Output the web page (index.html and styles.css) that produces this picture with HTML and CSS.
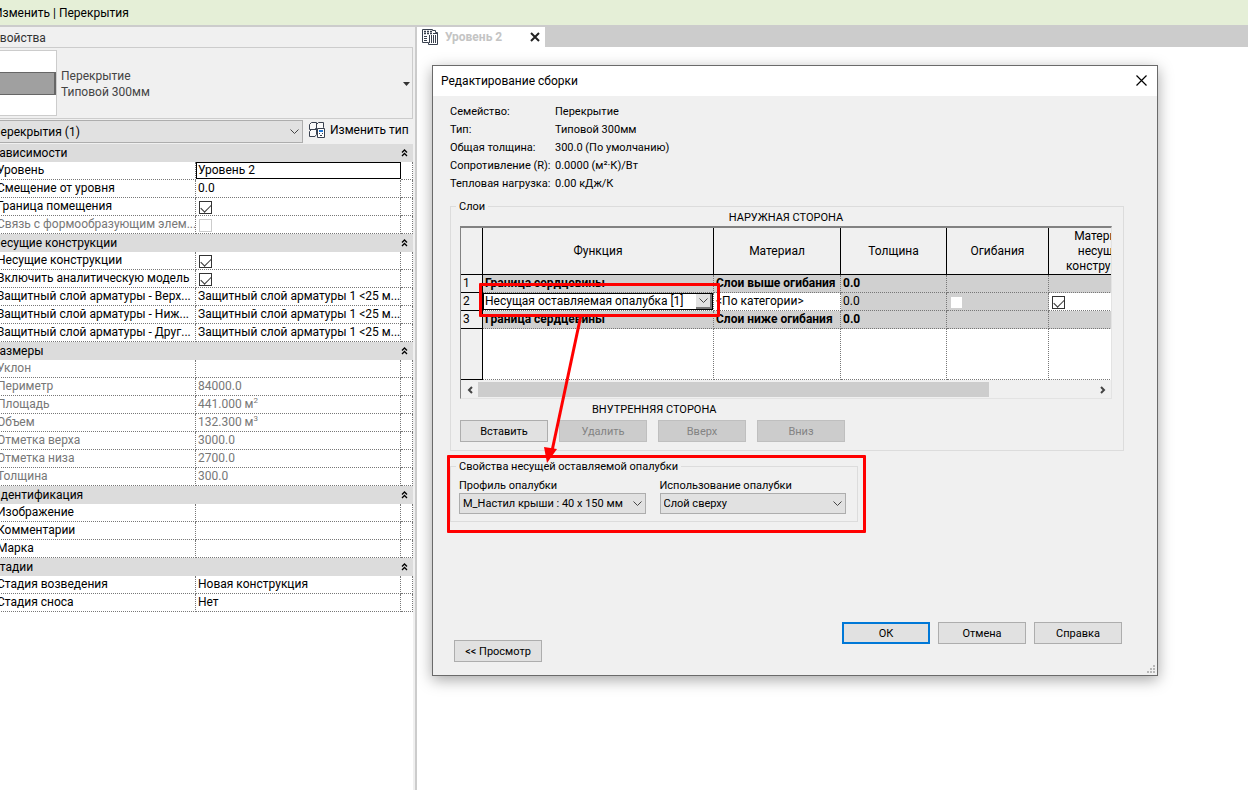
FILE: index.html
```html
<!DOCTYPE html>
<html lang="ru">
<head>
<meta charset="utf-8">
<title>Редактирование сборки</title>
<link rel="stylesheet" href="styles.css">
</head>
<body>
<div class="app">
  <header class="ribbon">Изменить | Перекрытия</header>
  <div class="main">
    <aside class="props">
      <h2 class="props-title">Свойства</h2>
      <div class="type-card">
        <div class="preview"><span class="slab"></span></div>
        <div class="type-name"><span>Перекрытие</span><span>Типовой 300мм</span></div>
        <button class="type-drop" aria-label="Выбор типа"><svg width="7" height="4" viewBox="0 0 7 4"><path d="M0 0h7L3.500 4z" fill="#333"/></svg></button>
      </div>
      <div class="filter">
        <div class="select filter-select">
          <select aria-label="Фильтр"><option>Перекрытия (1)</option></select>
          <svg class="chev" viewBox="0 0 9 5"><path d="M.5.5l4 4 4-4"/></svg>
        </div>
        <button class="edit-type">
          <svg width="16" height="16" viewBox="0 0 16 16" fill="#fafafa" stroke="#39414f"><path d="M.5 2.500l2-2h5v5l-1.500 2H.5zM7.500 2.500l2-2h5v5l-1.500 2H7.500zM.5 9.500l2-2h5v5l-1.500 2H.5z"/><path d="M8.500 6.500h7v9h-7z" fill="#fff"/><path d="M10 8h4v2h-4z" fill="#2277d4" stroke="none"/><path d="M10 11.500h1M13 11.500h1M11 13.500h2"/></svg>
          <span>Изменить тип</span>
        </button>
      </div>
      <table class="grid">
        <colgroup><col class="c-name"><col class="c-value"><col class="c-end"></colgroup>
        <tbody>
          <tr class="group"><th colspan="2">Зависимости</th><td><svg class="dbl" viewBox="0 0 7 8"><path d="M1 3.500L3.500 1 6 3.500M1 7l2.500-2.500L6 7"/></svg></td></tr>
          <tr><th>Уровень</th><td class="active"><input class="cell-input" type="text" value="Уровень 2" aria-label="Уровень"></td><td></td></tr>
          <tr><th>Смещение от уровня</th><td>0.0</td><td></td></tr>
          <tr><th>Граница помещения</th><td><input type="checkbox" checked aria-label="Граница помещения"></td><td></td></tr>
          <tr class="off"><th>Связь с формообразующим элем...</th><td><input type="checkbox" disabled aria-label="Связь с формообразующим элементом"></td><td></td></tr>
        </tbody>
        <tbody>
          <tr class="group"><th colspan="2">Несущие конструкции</th><td><svg class="dbl" viewBox="0 0 7 8"><path d="M1 3.500L3.500 1 6 3.500M1 7l2.500-2.500L6 7"/></svg></td></tr>
          <tr><th>Несущие конструкции</th><td><input type="checkbox" checked aria-label="Несущие конструкции"></td><td></td></tr>
          <tr><th>Включить аналитическую модель</th><td><input type="checkbox" checked aria-label="Включить аналитическую модель"></td><td></td></tr>
          <tr><th>Защитный слой арматуры - Верх...</th><td>Защитный слой арматуры 1 &lt;25 м...</td><td></td></tr>
          <tr><th>Защитный слой арматуры - Ниж...</th><td>Защитный слой арматуры 1 &lt;25 м...</td><td></td></tr>
          <tr><th>Защитный слой арматуры - Друг...</th><td>Защитный слой арматуры 1 &lt;25 м...</td><td></td></tr>
        </tbody>
        <tbody>
          <tr class="group"><th colspan="2">Размеры</th><td><svg class="dbl" viewBox="0 0 7 8"><path d="M1 3.500L3.500 1 6 3.500M1 7l2.500-2.500L6 7"/></svg></td></tr>
          <tr class="off"><th>Уклон</th><td></td><td></td></tr>
          <tr class="off"><th>Периметр</th><td>84000.0</td><td></td></tr>
          <tr class="off"><th>Площадь</th><td>441.000 м<sup>2</sup></td><td></td></tr>
          <tr class="off"><th>Объем</th><td>132.300 м<sup>3</sup></td><td></td></tr>
          <tr class="off"><th>Отметка верха</th><td>3000.0</td><td></td></tr>
          <tr class="off"><th>Отметка низа</th><td>2700.0</td><td></td></tr>
          <tr class="off"><th>Толщина</th><td>300.0</td><td></td></tr>
        </tbody>
        <tbody>
          <tr class="group"><th colspan="2">Идентификация</th><td><svg class="dbl" viewBox="0 0 7 8"><path d="M1 3.500L3.500 1 6 3.500M1 7l2.500-2.500L6 7"/></svg></td></tr>
          <tr><th>Изображение</th><td></td><td></td></tr>
          <tr><th>Комментарии</th><td></td><td></td></tr>
          <tr><th>Марка</th><td></td><td></td></tr>
        </tbody>
        <tbody>
          <tr class="group"><th colspan="2">Стадии</th><td><svg class="dbl" viewBox="0 0 7 8"><path d="M1 3.500L3.500 1 6 3.500M1 7l2.500-2.500L6 7"/></svg></td></tr>
          <tr><th>Стадия возведения</th><td>Новая конструкция</td><td></td></tr>
          <tr><th>Стадия сноса</th><td>Нет</td><td></td></tr>
        </tbody>
      </table>
    </aside>

    <main class="canvas">
      <div class="tabs">
        <div class="tab">
          <svg width="17" height="16" viewBox="0 0 17 16" fill="none" stroke="#39414f"><path d="M.5.500h10v1h3v2h2v12h-9v-2h-6z" fill="#fff"/><path d="M2 2.500h8M2 4.500h8" stroke-width="1.500" stroke-dasharray="2 1"/><path d="M2 7.500h4M2 9.500h4M2 11.500h4" stroke-dasharray="3 1"/><path d="M7.500 6v8M9.500 6v8M11.500 6v8M13.500 6v8M11 4.500h4"/></svg>
          <span>Уровень 2</span>
          <button class="tab-close" aria-label="Закрыть вид"><svg width="10" height="10" viewBox="0 0 10 10"><path d="M1 1l8 8M9 1L1 9" stroke="#222" stroke-width="2"/></svg></button>
        </div>
      </div>

      <section class="dialog" role="dialog" aria-labelledby="dlg-title">
        <div class="dlg-head">
          <h1 id="dlg-title">Редактирование сборки</h1>
          <button class="dlg-close" aria-label="Закрыть"><svg width="11" height="11" viewBox="0 0 11 11"><path d="M.5.5l10 10M10.500.5l-10 10" stroke="#000" stroke-width="1.200"/></svg></button>
        </div>
        <div class="dlg-body">
          <dl class="info">
            <dt>Семейство:</dt><dd>Перекрытие</dd>
            <dt>Тип:</dt><dd>Типовой 300мм</dd>
            <dt>Общая толщина:</dt><dd>300.0 (По умолчанию)</dd>
            <dt>Сопротивление (R):</dt><dd>0.0000 (м²·К)/Вт</dd>
            <dt>Тепловая нагрузка:</dt><dd>0.00 кДж/К</dd>
          </dl>

          <fieldset class="layers">
            <legend>Слои</legend>
            <p class="side outer">НАРУЖНАЯ СТОРОНА</p>
            <div class="sheet">
              <table class="layer-table">
                <colgroup><col class="l-num"><col class="l-func"><col class="l-mat"><col class="l-thick"><col class="l-wrap"><col class="l-str"></colgroup>
                <thead>
                  <tr><th></th><th>Функция</th><th>Материал</th><th>Толщина</th><th>Огибания</th><th>Материал<br>несущей<br>конструкции</th></tr>
                </thead>
                <tbody>
                  <tr class="core"><th>1</th><td>Граница сердцевины</td><td>Слои выше огибания</td><td>0.0</td><td></td><td></td></tr>
                  <tr><th>2</th>
                    <td class="edit"><div class="select cell-select"><select aria-label="Функция слоя"><option>Несущая оставляемая опалубка [1]</option></select><span class="drop"><svg viewBox="0 0 9 5"><path d="M.5.5l4 4 4-4"/></svg></span></div></td>
                    <td>&lt;По категории&gt;</td><td class="locked">0.0</td><td class="locked box"><input type="checkbox" class="blank" disabled aria-label="Огибания"></td><td class="box"><input type="checkbox" checked aria-label="Материал несущей конструкции"></td></tr>
                  <tr class="core"><th>3</th><td>Граница сердцевины</td><td>Слои ниже огибания</td><td>0.0</td><td></td><td></td></tr>
                  <tr class="rest"><th></th><td></td><td></td><td></td><td></td><td></td></tr>
                </tbody>
              </table>
              <div class="scroll">
                <button aria-label="Влево"><svg width="6" height="8" viewBox="0 0 6 8"><path d="M5 1L2 4l3 3"/></svg></button>
                <div class="track"><div class="thumb"></div></div>
                <button aria-label="Вправо"><svg width="6" height="8" viewBox="0 0 6 8"><path d="M1 1l3 3-3 3"/></svg></button>
              </div>
            </div>
            <p class="side inner">ВНУТРЕННЯЯ СТОРОНА</p>
            <div class="row-actions">
              <button class="btn">Вставить</button>
              <button class="btn" disabled>Удалить</button>
              <button class="btn" disabled>Вверх</button>
              <button class="btn" disabled>Вниз</button>
            </div>
          </fieldset>

          <fieldset class="deck">
            <legend>Свойства несущей оставляемой опалубки</legend>
            <div class="field">
              <label for="profile">Профиль опалубки</label>
              <div class="select"><select id="profile"><option>М_Настил крыши : 40 x 150 мм</option></select><svg class="chev" viewBox="0 0 9 5"><path d="M.5.5l4 4 4-4"/></svg></div>
            </div>
            <div class="field">
              <label for="usage">Использование опалубки</label>
              <div class="select"><select id="usage"><option>Слой сверху</option></select><svg class="chev" viewBox="0 0 9 5"><path d="M.5.5l4 4 4-4"/></svg></div>
            </div>
          </fieldset>

          <div class="footer">
            <button class="btn preview-btn">&lt;&lt; Просмотр</button>
            <div class="confirm">
              <button class="btn default">ОК</button>
              <button class="btn">Отмена</button>
              <button class="btn">Справка</button>
            </div>
          </div>
        </div>
        <svg class="grip" viewBox="0 0 8 8" fill="#b8b8b8"><path d="M6 0h2v2H6zM3 3h2v2H3zM6 3h2v2H6zM0 6h2v2H0zM3 6h2v2H3zM6 6h2v2H6z"/></svg>
        <span class="mark mark-func"></span>
        <span class="mark mark-deck"></span>
        <svg class="arrow" viewBox="0 0 50 150"><path d="M43 2L14 138" stroke="#f00" stroke-width="3"/><path d="M6 134l13 2-10 14z" fill="#f00"/></svg>
      </section>
    </main>
  </div>
</div>
</body>
</html>
```
FILE: styles.css
```css
* { box-sizing: border-box; }
body { margin: 0; background: #fff; color: #000; font: 12px/18px Roboto, "Noto Sans", sans-serif; }
h1, h2, p, dl, dd { margin: 0; font-size: inherit; font-weight: 400; }
button, select, input { font: inherit; color: inherit; margin: 0; }
button { padding: 0; border: 0; background: none; }
sup { font-size: 8px; line-height: 0; }

.app { display: flex; flex-direction: column; min-height: 100vh; overflow: hidden; }
.ribbon { height: 27px; padding-top: 4px; border-bottom: 2px solid #ccc; background: #e5efd7; text-indent: -6px; }
.main { display: flex; flex: 1; }

/* Properties palette */
.props { width: 429px; flex: none; margin-left: -12px; padding-right: 2px; border-right: 2px solid #ccc; box-shadow: inset -2px 0 #f0f0f0; }
.props-title { height: 20px; padding: 2px 4px; background: #f0f0f0; color: #333; }
.type-card { display: flex; align-items: center; height: 72px; padding-right: 2px; border: 1px solid #ccc; background: #f0f0f0; color: #444; line-height: 16px; }
.preview { display: flex; align-items: center; width: 68px; height: 66px; border: 1px solid #ccc; background: #fff; }
.slab { flex: 1; height: 23px; border: 1px solid #666; border-right-width: 2px; background: #a0a0a0; }
.type-name { display: flex; flex: 1; flex-direction: column; padding: 2px 0 0 4px; }
.type-drop { display: flex; padding-top: 2px; }
.filter { display: flex; gap: 6px; height: 25px; padding-top: 1px; background: #f0f0f0; }
.filter-select { width: 315px; height: 23px; }
.filter-select select { padding-left: 3px; }
.edit-type { display: flex; align-items: center; gap: 5px; height: 20px; }

.select { position: relative; }
.select select { display: block; width: 100%; height: 100%; border: 1px solid #adadad; border-radius: 0; background: #e1e1e1; appearance: none; outline: 0; }
.chev { position: absolute; right: 4px; top: 8px; width: 9px; height: 5px; }
.filter-select .chev { top: 9px; }
.chev path, .drop path { fill: none; stroke: #444; }

.grid { width: 425px; border-collapse: separate; border-spacing: 0; table-layout: fixed; }
.c-name { width: 208px; }
.c-value { width: 205px; }
.c-end { width: 12px; }
.grid th, .grid td { height: 18px; padding: 0 2px; border-right: 1px dotted #777; border-bottom: 1px dotted #777; font-weight: 400; line-height: 17px; text-align: left; vertical-align: top; white-space: nowrap; overflow: hidden; }
.grid th { padding-left: 9px; padding-right: 0; }
.grid .group th, .grid .group td { padding: 0 4px; border: 0; background: #dcdcdc; line-height: 18px; }
.grid .group td { padding: 5px 0 0; }
.grid .off { color: #777; }
.grid .active { padding: 0; border: 0; }
.cell-input { display: block; width: 100%; height: 17px; padding: 0 1px; border: 1px solid #000; background: #fff; outline: 0; }
.dbl { display: block; width: 7px; height: 8px; }
.dbl path { fill: none; stroke: #000; stroke-width: 1.300; }

input[type="checkbox"] { display: block; position: relative; width: 13px; height: 13px; margin: 3px 0 0 1px; border: 1px solid #333; background: #fff; appearance: none; }
input[type="checkbox"]:checked::after { content: ""; position: absolute; left: 1px; top: 2px; width: 9px; height: 5px; border: solid #333; border-width: 0 0 1px 1px; transform: rotate(-45deg); }
input[type="checkbox"]:disabled { border-color: #ccc; }
input.blank:disabled { border-color: #d0d0d0; }

/* View area */
.canvas { position: relative; flex: 1; min-width: 0; }
.tabs { display: flex; height: 20px; background: #ccc; }
.tab { display: flex; align-items: center; width: 128px; padding: 0 5px; background: #fff; color: #c4c4c4; font-weight: 700; }
.tab span { flex: 1; padding-left: 6px; }
.tab-close, .dlg-close { display: flex; }

/* Assembly editor window */
.dialog { position: absolute; left: 15px; right: 90px; top: 38px; border: 1px solid #6a6a6a; background: #f0f0f0; box-shadow: 0 4px 14px rgba(0, 0, 0, .35); font-size: 11px; }
.dlg-head { display: flex; align-items: center; justify-content: space-between; height: 30px; padding: 0 10px 1px 8px; background: #fff; font-size: 12px; }
.dlg-body { padding: 7px 33px 13px 17px; }
.info { display: grid; grid-template-columns: 105px 1fr; white-space: nowrap; }
fieldset { min-width: 0; margin: 0; padding: 0; border: 1px solid #dcdcdc; }
legend { padding: 1px 3px 0; line-height: 14px; }
.layers { margin-top: 6px; padding: 0 11px 8px 9px; }
.layers legend { margin-left: -4px; }
.side { line-height: 14px; }
.outer { margin-top: -3px; padding: 0 0 1px; text-align: center; }
.inner { padding: 4px 0 3px 132px; }

.sheet { overflow: hidden; border: 1px solid #e3e3e3; border-top: 2px solid #828282; border-left-color: #828282; background: #fff; font-size: 12px; line-height: 15px; }
.layer-table { width: 695px; border-collapse: separate; border-spacing: 0; table-layout: fixed; }
.l-num { width: 22px; }
.l-func { width: 231px; }
.l-mat { width: 127px; }
.l-thick { width: 106px; }
.l-wrap { width: 102px; }
.l-str { width: 107px; }
.layer-table th { padding: 0; border-right: 1px solid #000; border-bottom: 1px solid #000; background: #f0f0f0; font-weight: 400; }
.layer-table thead th { height: 47px; }
.layer-table td { height: 18px; padding: 0 2px; border-right: 1px dotted #777; border-bottom: 1px dotted #777; white-space: nowrap; }
.layer-table tbody th { padding-left: 2px; text-align: left; }
.layer-table .core td { background: #d0d0d0; font-weight: 700; }
.layer-table .locked { background: #d0d0d0; }
.layer-table .edit { padding: 0; }
.layer-table .box { padding-left: 2px; }
.layer-table .box input { margin-top: 2px; }
.layer-table .rest td { height: 51px; }
.cell-select { height: 17px; }
.cell-select select { padding: 0 1px; border-color: #000; background: #fff; }
.drop { position: absolute; top: 1px; right: 1px; display: flex; align-items: center; justify-content: center; width: 16px; height: 15px; border: 1px solid #777; border-width: 0 2px 2px 0; background: #e1e1e1; pointer-events: none; }
.drop svg { width: 9px; height: 5px; }
.scroll { display: flex; align-items: center; height: 18px; padding-top: 1px; background: #f0f0f0; }
.scroll button { display: flex; align-items: center; justify-content: center; width: 17px; height: 16px; }
.scroll path { fill: none; stroke: #444; stroke-width: 2; }
.track { flex: 1; }
.thumb { width: 83%; height: 15px; background: #cdcdcd; }

.row-actions { display: flex; gap: 11px; }
.btn { width: 88px; height: 22px; padding-top: 1px; border: 1px solid #adadad; background: #e1e1e1; line-height: 18px; }
.btn:disabled { border-color: #bfbfbf; background: #ccc; color: #838383; }
.btn.default { border: 2px solid #0078d7; }

.deck { display: flex; gap: 14px; width: 408px; margin-top: 8px; padding: 4px 11px 7px 8px; }
.deck legend { margin-left: -3px; }
.field { flex: 1; }
.field label { display: block; line-height: 15px; }
.field .select { height: 21px; }
.field select { padding: 1px 0 0 3px; }
.footer { display: flex; align-items: flex-end; justify-content: space-between; margin: 100px 2px 0 4px; }
.confirm { display: flex; gap: 8px; margin-bottom: 18px; }
.grip { position: absolute; right: 2px; bottom: 2px; width: 8px; height: 8px; }

/* Callouts over the dialog */
.mark { position: absolute; border: 3px solid #f00; border-radius: 1px; pointer-events: none; }
.mark-func { left: 46px; top: 217px; width: 241px; height: 34px; }
.mark-deck { left: 14px; top: 389px; width: 419px; height: 78px; }
.arrow { position: absolute; left: 105px; top: 247px; width: 50px; height: 150px; pointer-events: none; }
```
